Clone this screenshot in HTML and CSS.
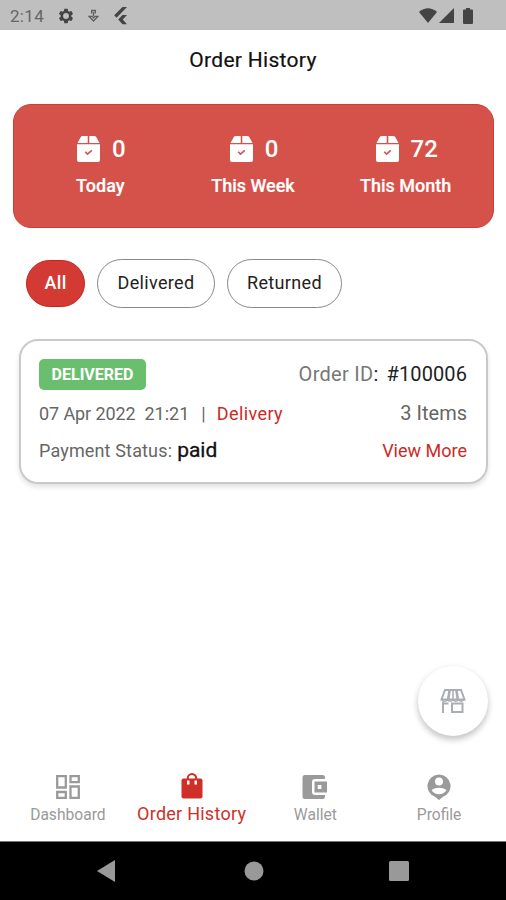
FILE: index.html
```html
<!DOCTYPE html>
<html lang="en">
<head>
    <meta charset="UTF-8">
    <meta name="viewport" content="width=device-width, initial-scale=1.0">
    <title>Order History</title>
    <link rel="stylesheet" href="styles.css">
</head>
<body>
    <svg class="defs" width="0" height="0">
        <symbol id="box" viewBox="0 0 23 26">
            <path fill="#fff" d="M6 0h4.700v7H0.500L3.500 1.400Q4.300 0 6 0zM12.300 0H17q1.700 0 2.500 1.400L22.500 7H12.300z"/>
            <path fill="#fff" d="M0 8.200h23V24q0 2-2 2H2q-2 0-2-2z"/>
            <path fill="none" stroke="#d5524a" stroke-width="1.600" d="M8.200 15.800l2.300 2.300 4.300-3.800"/>
        </symbol>
    </svg>

    <div class="status-bar">
        <span class="clock">2:14</span>
        <svg class="gear" width="18" height="18" viewBox="0 0 24 24"><path d="M19.140 12.940c.04-.3.060-.61.060-.94s-.02-.64-.07-.94l2.030-1.580a.49.49 0 0 0 .12-.61l-1.920-3.320a.49.49 0 0 0-.59-.22l-2.390.96a7 7 0 0 0-1.620-.94l-.36-2.540A.48.48 0 0 0 13.920 2.400h-3.840a.48.48 0 0 0-.47.410l-.36 2.540a7.300 7.300 0 0 0-1.620.94l-2.390-.96a.48.48 0 0 0-.59.22L2.740 8.870a.47.47 0 0 0 .12.610l2.030 1.580a6 6 0 0 0 0 1.880l-2.030 1.580a.49.49 0 0 0-.12.610l1.920 3.320c.12.22.37.29.59.22l2.390-.96c.5.380 1.030.7 1.620.94l.36 2.540c.05.240.24.410.47.410h3.840c.24 0 .44-.17.470-.41l.36-2.540a7 7 0 0 0 1.620-.94l2.390.96c.22.080.47 0 .59-.22l1.920-3.320a.47.47 0 0 0-.12-.61zM12 15.900a3.900 3.900 0 1 1 0-7.800 3.900 3.900 0 0 1 0 7.800z"/></svg>
        <svg class="debug" width="11" height="14" viewBox="0 0 11 14">
            <path d="M3.700 4.500V1.500h3.600v3M5.500 3v4M1 7.300h3l1.500 1.500L7 7.300h3L5.500 12z"/>
        </svg>
        <svg class="flutter" width="15" height="18" viewBox="0 0 15 18">
            <path d="M9.500 0H14L3.500 10.700 1.200 8.300zM9.500 8H14L9.700 12.500 14 17.200H9.500L5.200 12.500z"/>
        </svg>
        <div class="signals">
            <svg width="18" height="15" viewBox="0 0 18 15"><path d="M0 4Q9-3.500 18 4L9 15z"/></svg>
            <svg width="15" height="15" viewBox="0 0 15 15"><path d="M15 0v15H0z"/></svg>
            <svg class="battery" width="10" height="16" viewBox="0 0 10 16"><path d="M3 0h4v1.500h2q1 0 1 1V15q0 1-1 1H1q-1 0-1-1V2.500q0-1 1-1h2z"/></svg>
        </div>
    </div>

    <h1 class="title">Order History</h1>

    <div class="stats">
        <div class="stat">
            <div class="count"><svg width="23" height="26"><use href="#box"/></svg><span>0</span></div>
            <div class="period">Today</div>
        </div>
        <div class="stat">
            <div class="count"><svg width="23" height="26"><use href="#box"/></svg><span>0</span></div>
            <div class="period">This Week</div>
        </div>
        <div class="stat">
            <div class="count"><svg width="23" height="26"><use href="#box"/></svg><span>72</span></div>
            <div class="period">This Month</div>
        </div>
    </div>

    <div class="filters">
        <button class="chip active">All</button>
        <button class="chip delivered">Delivered</button>
        <button class="chip returned">Returned</button>
    </div>

    <div class="order">
        <div class="row row-id">
            <span class="badge">DELIVERED</span>
            <span class="order-id">Order ID<b>: #100006</b></span>
        </div>
        <div class="row row-date">
            <div class="when"><span class="date">07 Apr 2022</span><span class="time">21:21</span><span class="bar">|</span><span class="red delivery">Delivery</span></div>
            <span class="items">3 Items</span>
        </div>
        <div class="row row-pay">
            <div class="when"><span class="payment">Payment Status:</span><span class="paid">paid</span></div>
            <span class="red more">View More</span>
        </div>
    </div>

    <div class="fab">
        <svg width="26" height="24" viewBox="0 0 26 24" fill="none" stroke="#a9aeb1" stroke-width="2">
            <path d="M5 1h16l3.500 9.500h-23z"/>
            <path d="M9.600 1L8.200 10.500M16.400 1l1.400 9.500" stroke-width="2.600"/>
            <path d="M13 1v9.500" stroke-width="1.500"/>
            <path d="M2 10.800q2.700 3 5.500 0 2.700 3 5.500 0 2.700 3 5.500 0 2.700 3 5.500 0" stroke-width="1.500"/>
            <path d="M3 12.500V24M2 14.500h6.500M12 14.500h10.500V23H12z"/>
        </svg>
    </div>

    <nav class="tabs">
        <a class="tab dashboard">
            <svg width="24" height="24" viewBox="0 0 24 24" fill="none" stroke="currentColor" stroke-width="2.300"><path d="M1.200 1.200h8.600v11.300H1.200zM14.500 1.200h8.300v6h-8.300zM1.200 17h8.600v5.800H1.200zM14.500 11.500h8.300v11.300h-8.300z"/></svg>
            <span>Dashboard</span>
        </a>
        <a class="tab active">
            <svg width="22" height="26" viewBox="0 0 22 26" fill="currentColor">
                <path d="M2.500 5.500h17q2 0 2 2v16q0 2-2 2h-17q-2 0-2-2v-16q0-2 2-2z"/>
                <path d="M6.800 8V5.200a4.200 4.200 0 0 1 8.400 0V8" fill="none" stroke="currentColor" stroke-width="2"/>
                <path d="M6 7.500h2.500v4H6zM13.500 7.500H16v4h-2.500z" fill="#fff"/>
            </svg>
            <span>Order History</span>
        </a>
        <a class="tab wallet">
            <svg width="26" height="24" viewBox="0 0 26 24" fill="currentColor">
                <path d="M3 0h17.500q2.500 0 2.500 2.500V4H13q-3 0-3 3v10q0 3 3 3h10v1.500q0 2.500-2.500 2.500H3q-2.500 0-2.500-2.500v-19Q.5 0 3 0z"/>
                <path fill-rule="evenodd" d="M12.500 6.500H25v11H12.500zM15.700 10h3.700v4h-3.700z"/>
            </svg>
            <span>Wallet</span>
        </a>
        <a class="tab profile">
            <svg width="24" height="26" viewBox="0 0 24 26" fill="currentColor">
                <path fill-rule="evenodd" d="M12 .5a11.500 11.500 0 0 1 4 22.300L12 26l-4-3.200A11.500 11.500 0 0 1 12 .5zM12 3.500a4 4 0 1 0 0 8 4 4 0 0 0 0-8zM4.500 16.500q3 3.700 7.500 3.700t7.500-3.700Q17.500 13.800 12 13.800t-7.500 2.700z"/>
            </svg>
            <span>Profile</span>
        </a>
    </nav>

    <div class="system-nav">
        <svg width="18" height="22" viewBox="0 0 18 22"><path d="M18 0v22L0 11z"/></svg>
        <svg class="home" width="20" height="20" viewBox="0 0 20 20"><circle cx="10" cy="10" r="9.500"/></svg>
        <svg width="20" height="20" viewBox="0 0 20 20"><rect width="20" height="20" rx="1.500"/></svg>
    </div>
</body>
</html>
```
FILE: styles.css
```css
* {
    box-sizing: border-box;
}

body {
    margin: 0;
    width: 506px;
    height: 900px;
    display: flex;
    flex-direction: column;
    position: relative;
    overflow: hidden;
    background: #fff;
    font-family: Roboto, "Liberation Sans", sans-serif;
    color: #111;
}

.defs {
    position: absolute;
}

svg {
    display: block;
    flex: none;
}

/* Status bar */
.status-bar {
    height: 30px;
    flex: none;
    background: #bfbfbf;
    display: flex;
    align-items: center;
    padding: 1px 33px 0 10px;
    fill: #444;
}

.clock {
    width: 47px;
    font-size: 17px;
    letter-spacing: 0.3px;
    color: #666;
}

.debug {
    margin-left: 13px;
    fill: none;
    stroke: #5f5f5f;
    stroke-width: 1.3;
}

.flutter {
    margin-left: 14px;
}

.signals {
    margin-left: auto;
    display: flex;
    align-items: center;
    gap: 2px;
}

.battery {
    margin-left: 7px;
}

/* Header */
.title {
    margin: 0;
    height: 74px;
    line-height: 60px;
    text-align: center;
    font-size: 21px;
    font-weight: 400;
    letter-spacing: 0.3px;
    -webkit-text-stroke: 0.2px;
}

/* Totals */
.stats {
    margin: 0 12px 0 13px;
    height: 124px;
    flex: none;
    padding: 28px 11px 0 10px;
    display: grid;
    grid-template-columns: repeat(3, 1fr);
    border: 1px solid #cf3e36;
    border-radius: 18px;
    background: #d5524a;
    color: #fff;
    text-align: center;
}

.count {
    display: flex;
    justify-content: center;
    align-items: center;
    gap: 12px;
    height: 31px;
    padding: 1px 0 0 2px;
    font-size: 24px;
    font-weight: 500;
}

.period {
    margin-top: 11px;
    line-height: 22px;
    font-size: 18px;
    font-weight: 500;
    -webkit-text-stroke: 0.2px;
}

/* Filters */
.filters {
    margin: 31px 0 0 26px;
    display: flex;
    align-items: center;
    gap: 12px;
}

.chip {
    height: 49px;
    padding: 0 0 3px;
    border: 1px solid #888;
    border-radius: 25px;
    background: #fff;
    font-family: inherit;
    font-size: 18px;
    letter-spacing: 0.35px;
    color: #222;
}

.chip.active {
    width: 59px;
    height: 47px;
    border-color: #cc1f1a;
    background: #d23a33;
    color: #fff;
    font-weight: 500;
}

.delivered {
    width: 118px;
}

.returned {
    width: 115px;
}

/* Order card */
.order {
    margin: 31px 18px 0 19px;
    height: 145px;
    padding: 18px 19px 0 18px;
    border: 2px solid #c9c9c9;
    border-radius: 19px;
    box-shadow: 0 3px 5px rgba(0, 0, 0, 0.12);
    color: #666;
}

.row {
    display: flex;
    justify-content: space-between;
    align-items: center;
    font-size: 18px;
}

.row-id {
    height: 30px;
}

.row-date {
    height: 48px;
}

.row-pay {
    height: 26px;
}

.when {
    display: flex;
    align-items: center;
}

.badge {
    width: 107px;
    height: 31px;
    line-height: 31px;
    border-radius: 5px;
    background: #6abf6e;
    color: #fff;
    font-size: 16px;
    font-weight: 700;
    text-align: center;
}

.order-id {
    font-size: 20px;
    letter-spacing: 0.3px;
    color: #777;
}

.order-id b {
    font-weight: 400;
    letter-spacing: 0.1px;
    word-spacing: 3px;
    color: #222;
}

.date {
    letter-spacing: -0.1px;
}

.time {
    margin-left: 9px;
}

.bar {
    margin: 0 11px 0 12px;
}

.delivery {
    letter-spacing: 0.4px;
}

.items {
    font-size: 20px;
}

.red {
    color: #cc2a24;
}

.payment {
    letter-spacing: 0.15px;
}

.paid {
    margin-left: 5px;
    font-size: 21px;
    color: #111;
    -webkit-text-stroke: 0.3px;
}

/* Store button floats over the page */
.fab {
    position: absolute;
    right: 18px;
    bottom: 164px;
    width: 70px;
    height: 70px;
    display: flex;
    align-items: center;
    justify-content: center;
    border-radius: 50%;
    background: #fff;
    box-shadow: 0 4px 6px rgba(0, 0, 0, 0.2), 0 1px 8px rgba(0, 0, 0, 0.06);
}

/* Bottom tabs */
.tabs {
    margin-top: auto;
    height: 76px;
    flex: none;
    padding: 0 5px 0 6px;
    display: grid;
    grid-template-columns: repeat(4, 1fr);
}

.tab {
    display: flex;
    flex-direction: column;
    align-items: center;
    color: #9a9a9a;
    font-size: 15.6px;
}

.tab svg {
    height: 26px;
    margin-top: 9px;
}

.tab.active svg {
    margin-top: 8px;
}

.tab span {
    margin-top: 4px;
    line-height: 22px;
    white-space: nowrap;
}

.tab.active {
    color: #cf2f28;
    font-size: 18px;
    letter-spacing: 0.25px;
}

.system-nav {
    height: 59px;
    flex: none;
    display: flex;
    align-items: center;
    justify-content: space-between;
    padding: 0 97px;
    border-top: 1px solid #777;
    background: #000;
    fill: #999;
}

.home {
    margin-left: 3px;
}
```
